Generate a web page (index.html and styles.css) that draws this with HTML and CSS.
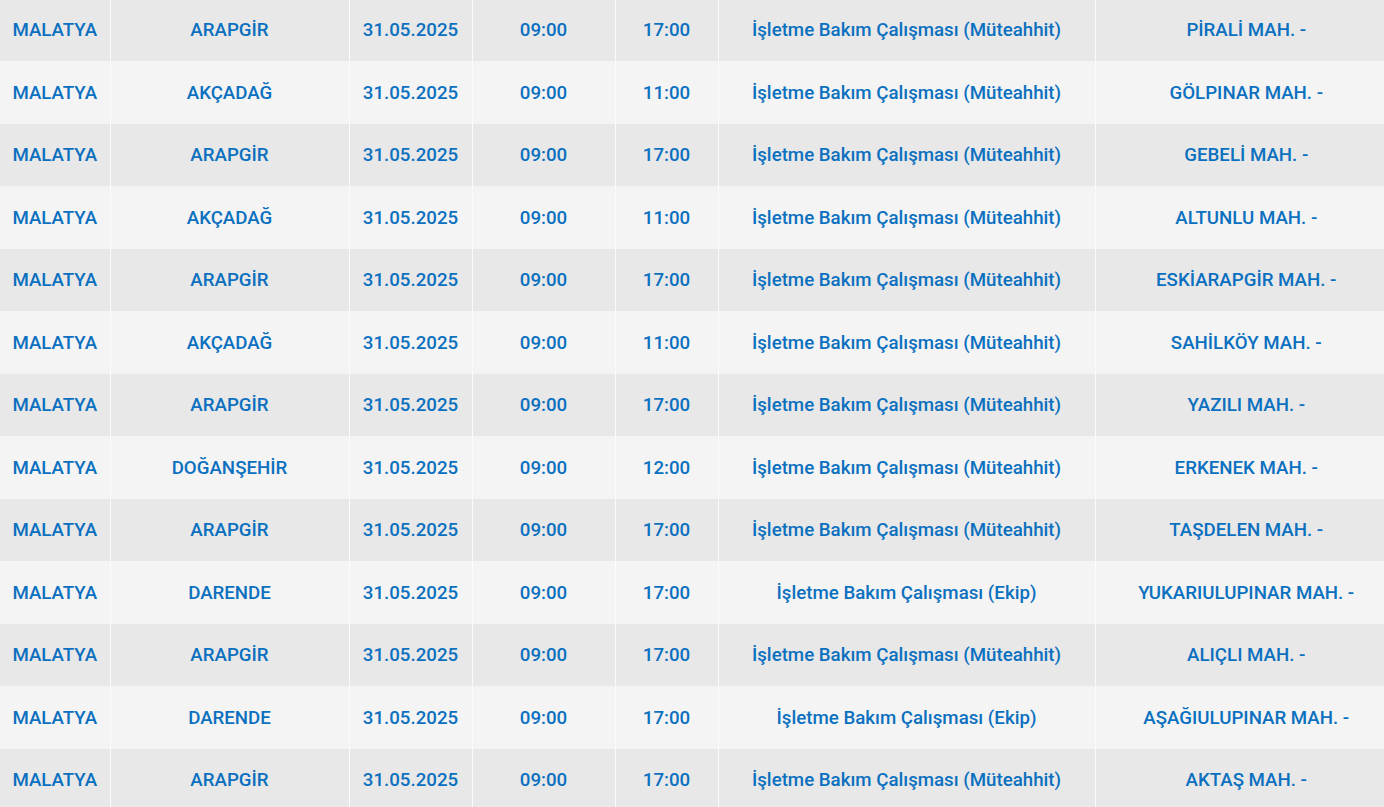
FILE: index.html
```
<!DOCTYPE html>
<html lang="tr">
<head>
<meta charset="utf-8">
<title>Kesinti Listesi</title>
<link rel="stylesheet" href="styles.css">
</head>
<body>
<table class="outages">
<colgroup>
<col class="c1"><col class="c2"><col class="c3"><col class="c4"><col class="c5"><col class="c6"><col class="c7">
</colgroup>
<tbody>
<tr><td>MALATYA</td><td>ARAPGİR</td><td>31.05.2025</td><td>09:00</td><td>17:00</td><td>İşletme Bakım Çalışması (Müteahhit)</td><td>PİRALİ MAH. -</td></tr>
<tr><td>MALATYA</td><td>AKÇADAĞ</td><td>31.05.2025</td><td>09:00</td><td>11:00</td><td>İşletme Bakım Çalışması (Müteahhit)</td><td>GÖLPINAR MAH. -</td></tr>
<tr><td>MALATYA</td><td>ARAPGİR</td><td>31.05.2025</td><td>09:00</td><td>17:00</td><td>İşletme Bakım Çalışması (Müteahhit)</td><td>GEBELİ MAH. -</td></tr>
<tr><td>MALATYA</td><td>AKÇADAĞ</td><td>31.05.2025</td><td>09:00</td><td>11:00</td><td>İşletme Bakım Çalışması (Müteahhit)</td><td>ALTUNLU MAH. -</td></tr>
<tr><td>MALATYA</td><td>ARAPGİR</td><td>31.05.2025</td><td>09:00</td><td>17:00</td><td>İşletme Bakım Çalışması (Müteahhit)</td><td>ESKİARAPGİR MAH. -</td></tr>
<tr><td>MALATYA</td><td>AKÇADAĞ</td><td>31.05.2025</td><td>09:00</td><td>11:00</td><td>İşletme Bakım Çalışması (Müteahhit)</td><td>SAHİLKÖY MAH. -</td></tr>
<tr><td>MALATYA</td><td>ARAPGİR</td><td>31.05.2025</td><td>09:00</td><td>17:00</td><td>İşletme Bakım Çalışması (Müteahhit)</td><td>YAZILI MAH. -</td></tr>
<tr><td>MALATYA</td><td>DOĞANŞEHİR</td><td>31.05.2025</td><td>09:00</td><td>12:00</td><td>İşletme Bakım Çalışması (Müteahhit)</td><td>ERKENEK MAH. -</td></tr>
<tr><td>MALATYA</td><td>ARAPGİR</td><td>31.05.2025</td><td>09:00</td><td>17:00</td><td>İşletme Bakım Çalışması (Müteahhit)</td><td>TAŞDELEN MAH. -</td></tr>
<tr><td>MALATYA</td><td>DARENDE</td><td>31.05.2025</td><td>09:00</td><td>17:00</td><td>İşletme Bakım Çalışması (Ekip)</td><td>YUKARIULUPINAR MAH. -</td></tr>
<tr><td>MALATYA</td><td>ARAPGİR</td><td>31.05.2025</td><td>09:00</td><td>17:00</td><td>İşletme Bakım Çalışması (Müteahhit)</td><td>ALIÇLI MAH. -</td></tr>
<tr><td>MALATYA</td><td>DARENDE</td><td>31.05.2025</td><td>09:00</td><td>17:00</td><td>İşletme Bakım Çalışması (Ekip)</td><td>AŞAĞIULUPINAR MAH. -</td></tr>
<tr><td>MALATYA</td><td>ARAPGİR</td><td>31.05.2025</td><td>09:00</td><td>17:00</td><td>İşletme Bakım Çalışması (Müteahhit)</td><td>AKTAŞ MAH. -</td></tr>
</tbody>
</table>
</body>
</html>
```
FILE: styles.css
```
html, body {
  margin: 0;
  padding: 0;
  background: #f4f4f4;
  overflow: hidden;
}
.outages {
  width: 1384px;
  margin-top: -1.5px;
  border-collapse: collapse;
  table-layout: fixed;
  font-family: Roboto, "Liberation Sans", Arial, sans-serif;
  font-weight: 500;
  font-size: 18.7px;
  color: #0b70bf;
}
.c1 { width: 110px; }
.c2 { width: 239px; }
.c3 { width: 123px; }
.c4 { width: 143px; }
.c5 { width: 103px; }
.c6 { width: 377px; }
.c7 { width: 289px; }
.outages tr:nth-child(odd) { background: #e8e8e8; }
.outages tr:nth-child(even) { background: #f4f4f4; }
.outages td {
  box-sizing: border-box;
  height: 62.5px;
  padding: 2px 0 0;
  text-align: center;
  vertical-align: middle;
  border-left: 1px solid #fafbfc;
  line-height: 21px;
  white-space: nowrap;
}
.outages td:first-child { border-left: none; }
.outages td:last-child { padding-left: 13px; }
```
